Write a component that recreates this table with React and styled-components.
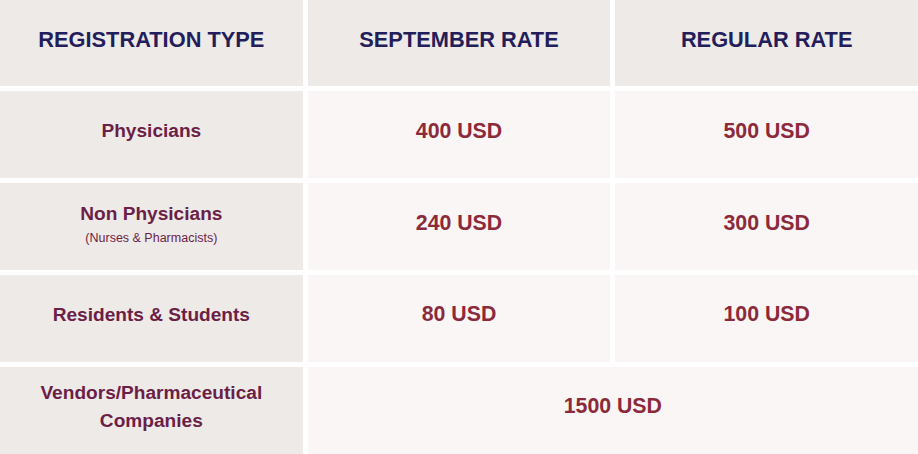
import React from "react";
import styled, { createGlobalStyle } from "styled-components";

const GlobalStyle = createGlobalStyle`
  html, body {
    margin: 0;
    padding: 0;
    background: #fff;
  }
  body {
    font-family: "Liberation Sans", Arial, sans-serif;
  }
`;

const rows = [
  { label: "Physicians", early: "400 USD", regular: "500 USD" },
  {
    label: "Non Physicians",
    note: "(Nurses & Pharmacists)",
    early: "240 USD",
    regular: "300 USD",
  },
  { label: "Residents & Students", early: "80 USD", regular: "100 USD" },
];

class App extends React.Component {
  render() {
    return (
      <>
        <GlobalStyle />
        <Table>
          <HeadCell>REGISTRATION TYPE</HeadCell>
          <HeadCell>SEPTEMBER RATE</HeadCell>
          <HeadCell>REGULAR RATE</HeadCell>

          {rows.map((row) => (
            <React.Fragment key={row.label}>
              <LabelCell>
                <Label>{row.label}</Label>
                {row.note && <Note>{row.note}</Note>}
              </LabelCell>
              <PriceCell>{row.early}</PriceCell>
              <PriceCell>{row.regular}</PriceCell>
            </React.Fragment>
          ))}

          <LabelCell>
            <Label>
              Vendors/Pharmaceutical
              <br />
              Companies
            </Label>
          </LabelCell>
          <PriceCell span={2}>1500 USD</PriceCell>
        </Table>
      </>
    );
  }
}

const Table = styled.div`
  width: 918px;
  height: 454px;
  display: grid;
  grid-template-columns: repeat(3, 1fr);
  grid-template-rows: 86.4px repeat(4, 87.2px);
  column-gap: 5px;
  row-gap: 4.7px;
  overflow: hidden;
  background: #fff;
`;

const Cell = styled.div`
  display: flex;
  flex-direction: column;
  align-items: center;
  justify-content: center;
  text-align: center;
  padding-bottom: 7px;
  box-sizing: border-box;
`;

const HeadCell = styled(Cell)`
  background: #eeeae7;
  color: #231d5b;
  font-size: 21.8px;
  font-weight: 700;
`;

const LabelCell = styled(Cell)`
  background: #eeeae7;
  color: #6b1e46;
`;

const Label = styled.div`
  font-size: 19.1px;
  font-weight: 700;
  line-height: 27.5px;
`;

const Note = styled.div`
  font-size: 12.5px;
  line-height: 16px;
  margin-top: 2px;
`;

const PriceCell = styled(Cell)`
  grid-column: span ${(props) => props.span || 1};
  background: #f9f6f5;
  color: #8c2a3b;
  font-size: 21.3px;
  font-weight: 700;
`;

export default App;
